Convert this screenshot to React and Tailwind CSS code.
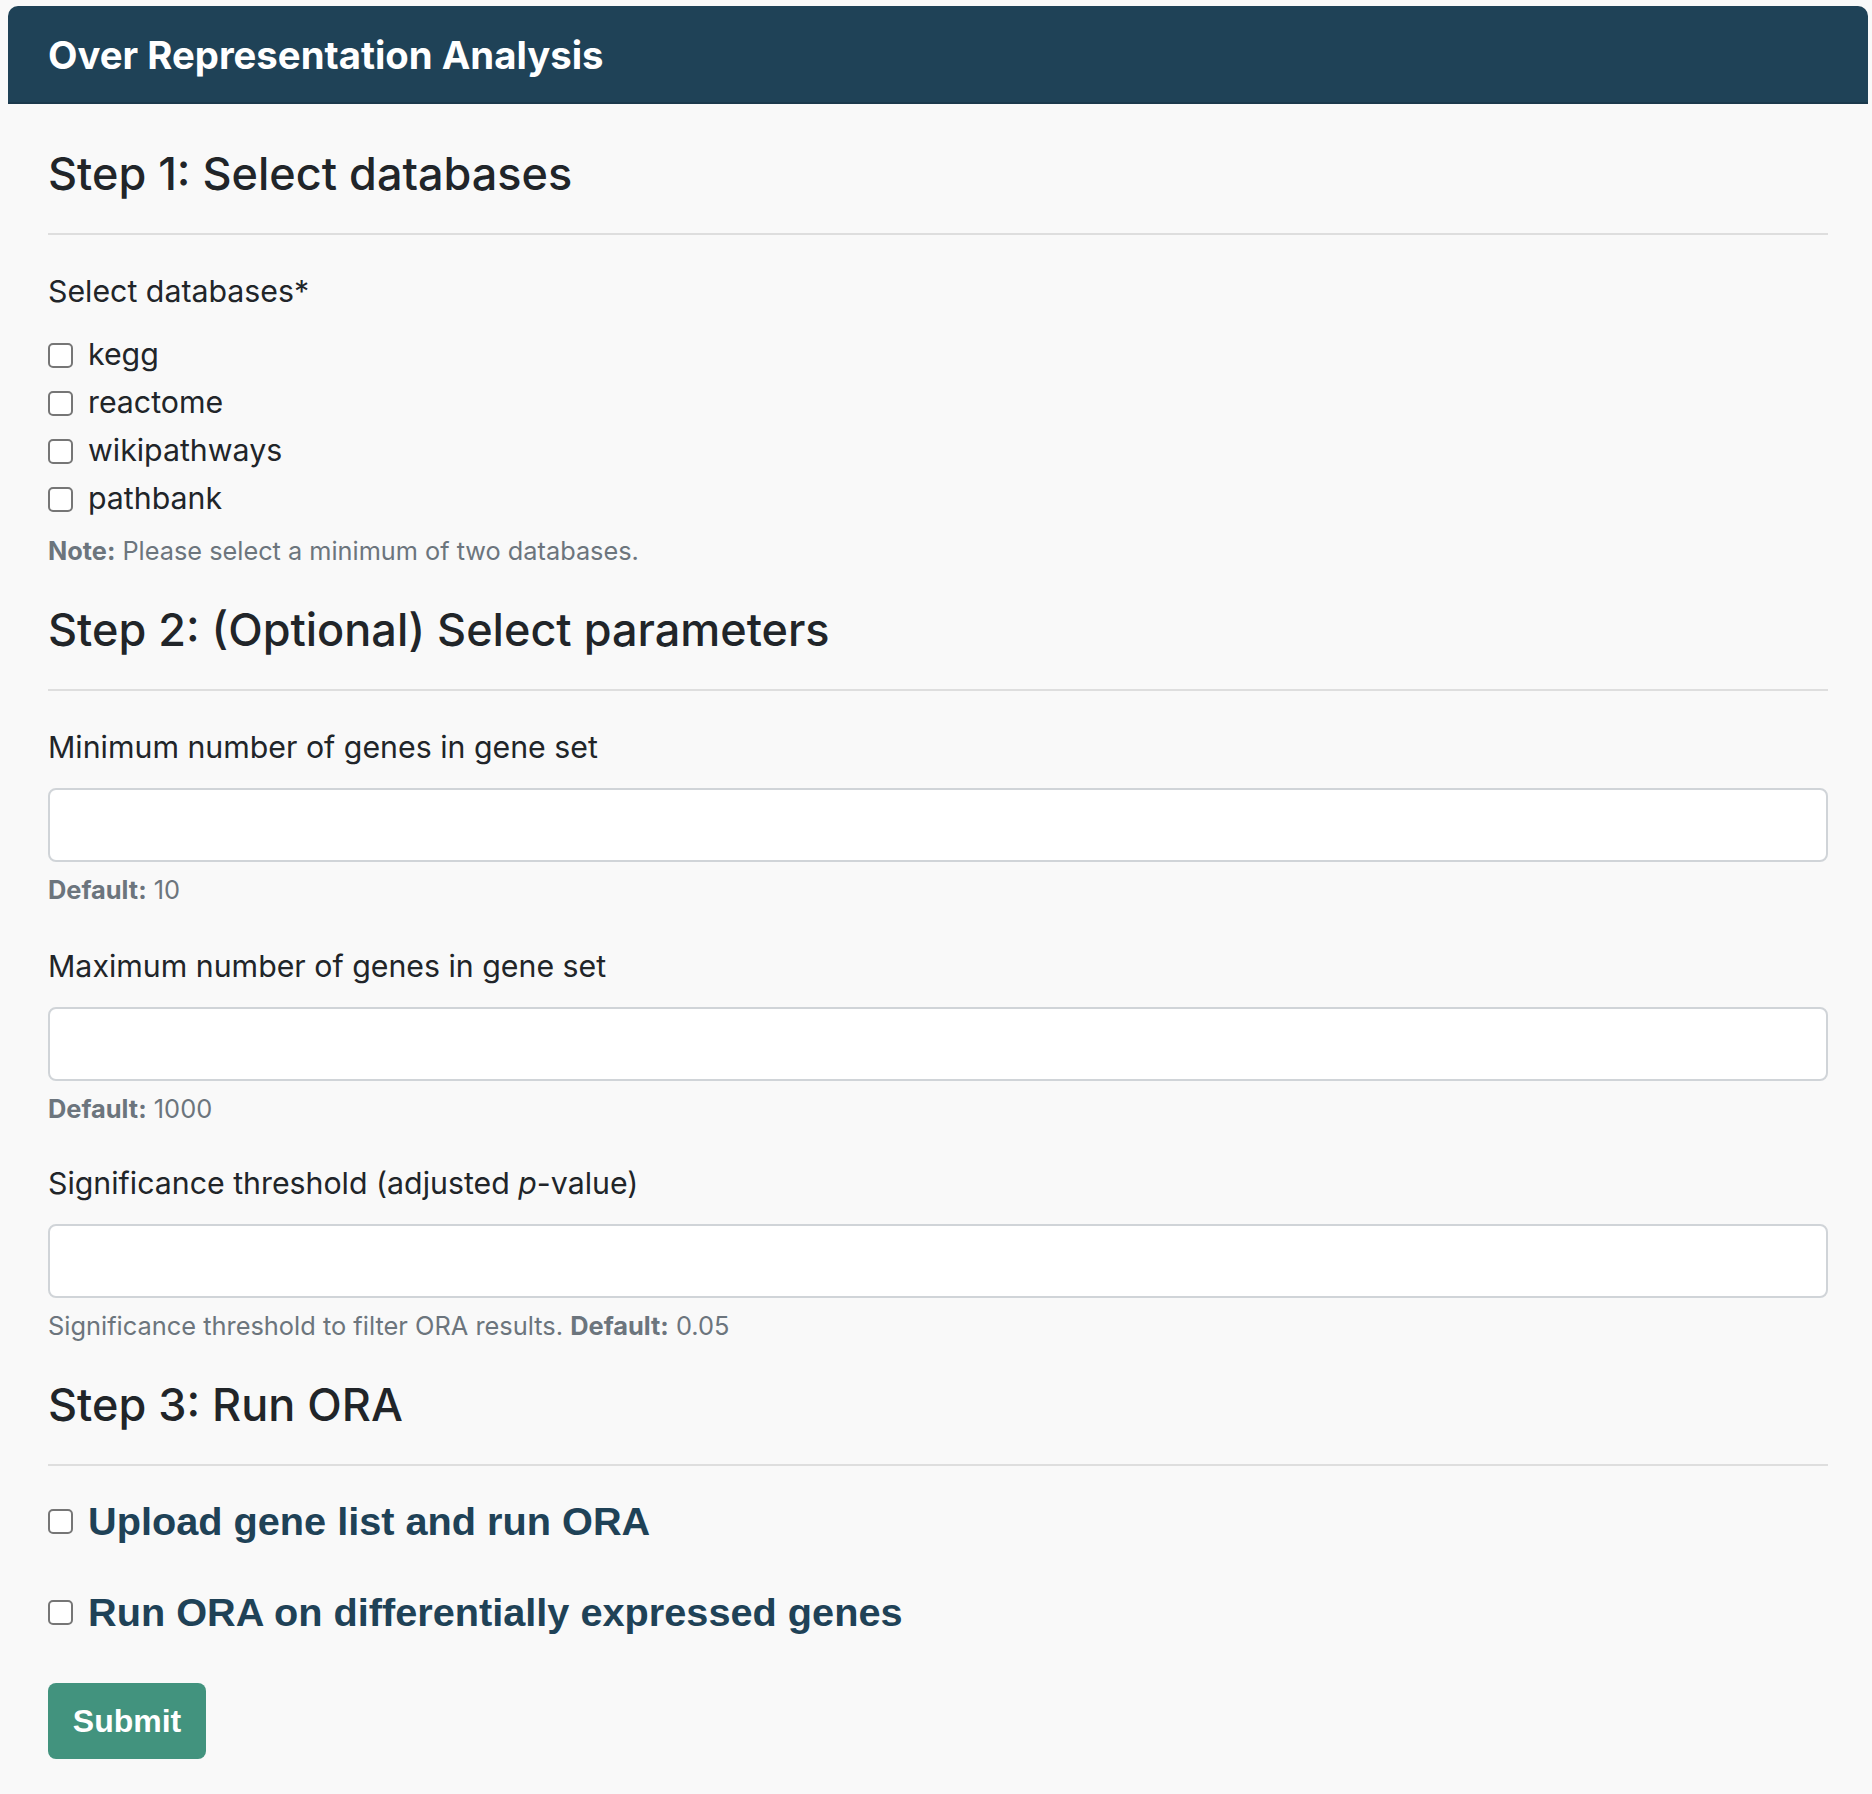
import React from "react";

function Box() {
  return (
    <span className="inline-block w-[25px] h-[25px] shrink-0 rounded-[5px] border-2 border-[#767676] bg-white"></span>
  );
}

function Heading({ children }) {
  return (
    <div>
      <h3 className="text-[45px] leading-[54px] font-medium text-[#212529]">{children}</h3>
      <div className="mt-[32px] h-[2px] bg-[#dedede]"></div>
    </div>
  );
}

function Field({ label, help }) {
  return (
    <div>
      <div className="text-[30.3px] leading-[39px] text-[#212529]">{label}</div>
      <div className="mt-[21px] h-[74px] rounded-[8px] border-2 border-[#d0d4d8] bg-white"></div>
      <div className="mt-[11px] text-[25.4px] leading-[33px] text-[#6c757d]">{help}</div>
    </div>
  );
}

export default function App() {
  return (
    <div className="min-h-[1794px] bg-[#f9f9f9] pt-[6px] pl-[8px] pr-[4px]" style={{ fontFamily: "Inter, 'Noto Sans', sans-serif" }}>
      <div className="rounded-t-[10px] bg-[#f9f9f9]">
        <div className="h-[98px] rounded-t-[10px] bg-[#1f4257] border-b-2 border-[#1b394c] pl-[40px] pt-[4px] flex items-center">
          <span className="text-[38.3px] font-bold text-white">Over Representation Analysis</span>
        </div>
        <div className="pl-[40px] pr-[40px] pt-[43px] pb-[40px]">
          <Heading>Step 1: Select databases</Heading>
          <div className="mt-[37px] text-[30.3px] leading-[39px] text-[#212529]">Select databases*</div>
          <div className="mt-[20px] flex flex-col">
            {["kegg", "reactome", "wikipathways", "pathbank"].map((d) => (
              <label key={d} className="h-[48px] flex items-center gap-[15px] text-[30.3px] text-[#212529]">
                <Box />
                <span>{d}</span>
              </label>
            ))}
          </div>
          <div className="mt-[11px] text-[25.3px] leading-[33px] text-[#6c757d]">
            <b className="font-bold">Note:</b> Please select a minimum of two databases.
          </div>

          <div className="mt-[36px]">
            <Heading>Step 2: (Optional) Select parameters</Heading>
          </div>
          <div className="mt-[37px]">
            <Field label="Minimum number of genes in gene set" help={<><b className="font-bold">Default:</b> 10</>} />
          </div>
          <div className="mt-[41px]">
            <Field label="Maximum number of genes in gene set" help={<><b className="font-bold">Default:</b> 1000</>} />
          </div>
          <div className="mt-[39px]">
            <Field
              label={<>Significance threshold (adjusted <i>p</i>-value)</>}
              help={<>Significance threshold to filter ORA results. <b className="font-bold">Default:</b> 0.05</>}
            />
          </div>

          <div className="mt-[36px]">
            <Heading>Step 3: Run ORA</Heading>
          </div>
          <div className="mt-[32px] flex flex-col gap-[44px]" style={{ fontFamily: "'Liberation Sans', Arial, sans-serif" }}>
            <label className="h-[47px] flex items-center gap-[15px]">
              <Box />
              <span className="text-[39.7px] font-bold text-[#1f4257]">Upload gene list and run ORA</span>
            </label>
            <label className="h-[47px] flex items-center gap-[15px]">
              <Box />
              <span className="text-[39.7px] font-bold text-[#1f4257]">Run ORA on differentially expressed genes</span>
            </label>
          </div>
          <button
            className="mt-[47px] w-[158px] h-[76px] rounded-[8px] bg-[#42937e] text-white text-[32px] font-bold"
            style={{ fontFamily: "'Liberation Sans', Arial, sans-serif" }}
          >
            Submit
          </button>
        </div>
      </div>
    </div>
  );
}
